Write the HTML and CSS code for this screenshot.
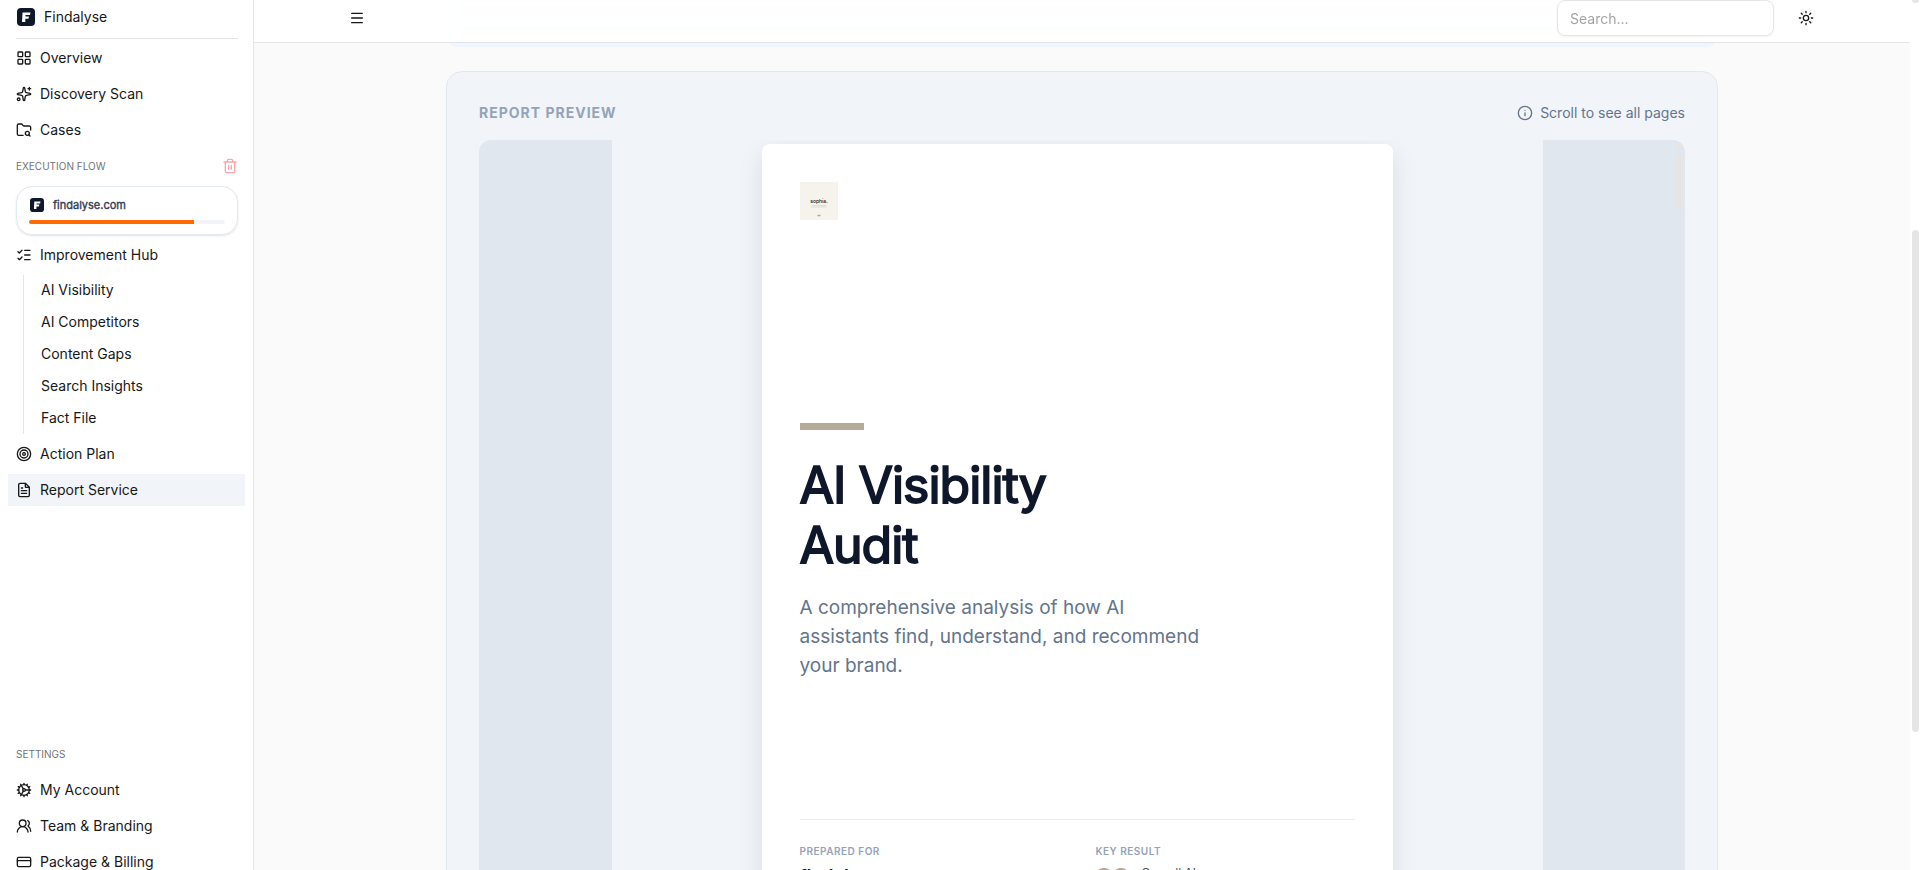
FILE: index.html
```html
<!DOCTYPE html>
<html lang="en">

<head>
    <meta charset="utf-8">
    <meta name="viewport" content="width=device-width, initial-scale=1">
    <title>Findalyse - Report Service</title>
    <link rel="stylesheet" href="styles.css">
</head>

<body>

    <aside class="sidebar">
        <div class="brand">
            <svg class="brand-logo" viewBox="0 0 18 18"><rect width="18" height="18" rx="4" fill="#0f172a"/><path d="M5.5 4.500h8l-.5 2.500H8.500v1.500h3.500l-.5 2.300H8.300V14H5z" fill="#fff"/></svg>
            <span>Findalyse</span>
        </div>

        <nav class="nav">
            <a class="nav-item" href="#">
                <svg class="icon" viewBox="0 0 24 24"><rect x="3" y="3" width="7" height="7" rx="1"/><rect x="14" y="3" width="7" height="7" rx="1"/><rect x="14" y="14" width="7" height="7" rx="1"/><rect x="3" y="14" width="7" height="7" rx="1"/></svg>
                Overview
            </a>
            <a class="nav-item" href="#">
                <svg class="icon" viewBox="0 0 24 24"><path d="M11.017 2.814a1 1 0 0 1 1.966 0l1.051 5.558a2 2 0 0 0 1.594 1.594l5.558 1.051a1 1 0 0 1 0 1.966l-5.558 1.051a2 2 0 0 0-1.594 1.594l-1.051 5.558a1 1 0 0 1-1.966 0l-1.051-5.558a2 2 0 0 0-1.594-1.594l-5.558-1.051a1 1 0 0 1 0-1.966l5.558-1.051a2 2 0 0 0 1.594-1.594z"/><path d="M20 2v4M22 4h-4"/><circle cx="4" cy="20" r="2"/></svg>
                Discovery Scan
            </a>
            <a class="nav-item" href="#">
                <svg class="icon" viewBox="0 0 24 24"><path d="M10.700 20H4a2 2 0 0 1-2-2V5a2 2 0 0 1 2-2h3.900a2 2 0 0 1 1.690.9l.81 1.200a2 2 0 0 0 1.670.9H20a2 2 0 0 1 2 2v4.100"/><path d="m21 21-1.900-1.900"/><circle cx="17" cy="17" r="3"/></svg>
                Cases
            </a>

            <div class="section-label">
                <span>EXECUTION FLOW</span>
                <button class="trash" type="button" aria-label="Clear flow">
                    <svg class="icon" viewBox="0 0 24 24"><path d="M3 6h18M19 6v14a2 2 0 0 1-2 2H7a2 2 0 0 1-2-2V6M8 6V4a2 2 0 0 1 2-2h4a2 2 0 0 1 2 2v2M10 11v6M14 11v6"/></svg>
                </button>
            </div>

            <div class="flow-card">
                <div class="flow-site">
                    <svg class="flow-logo" viewBox="0 0 18 18"><rect width="18" height="18" rx="4" fill="#0f172a"/><path d="M5.500 4.500h8l-.5 2.500H8.500v1.500h3.500l-.5 2.300H8.300V14H5z" fill="#fff"/></svg>
                    <span>findalyse.com</span>
                </div>
                <div class="progress"><div class="progress-bar" style="width: 84%"></div></div>
            </div>

            <a class="nav-item" href="#">
                <svg class="icon" viewBox="0 0 24 24"><path d="M13 5h8M13 12h8M13 19h8M3 17l2 2 4-4M3 7l2 2 4-4"/></svg>
                Improvement Hub
            </a>
            <div class="subnav">
                <a href="#">AI Visibility</a>
                <a href="#">AI Competitors</a>
                <a href="#">Content Gaps</a>
                <a href="#">Search Insights</a>
                <a href="#">Fact File</a>
            </div>
            <a class="nav-item" href="#">
                <svg class="icon" viewBox="0 0 24 24"><circle cx="12" cy="12" r="10"/><circle cx="12" cy="12" r="6"/><circle cx="12" cy="12" r="2"/></svg>
                Action Plan
            </a>
            <a class="nav-item active" href="#">
                <svg class="icon" viewBox="0 0 24 24"><path d="M6 22a2 2 0 0 1-2-2V4a2 2 0 0 1 2-2h8l6 6v12a2 2 0 0 1-2 2z"/><path d="M14 2v5a1 1 0 0 0 1 1h5M10 9H8M16 13H8M16 17H8"/></svg>
                Report Service
            </a>
        </nav>

        <nav class="nav">
            <div class="section-label"><span>SETTINGS</span></div>
            <a class="nav-item" href="#">
                <svg class="icon" viewBox="0 0 24 24"><path d="M11 10.270 7 3.340M11 13.730l-4 6.930M12 22v-2M12 2v2M14 12h8M17 20.660l-1-1.730M17 3.340l-1 1.730M2 12h2M20.660 17l-1.730-1M20.660 7l-1.730 1M3.340 17l1.730-1M3.340 7l1.730 1"/><circle cx="12" cy="12" r="2"/><circle cx="12" cy="12" r="8"/></svg>
                My Account
            </a>
            <a class="nav-item" href="#">
                <svg class="icon" viewBox="0 0 24 24"><path d="M18 21a8 8 0 0 0-16 0"/><circle cx="10" cy="8" r="5"/><path d="M22 20c0-3.370-2-6.500-4-8a5 5 0 0 0-.45-8.300"/></svg>
                Team &amp; Branding
            </a>
            <a class="nav-item" href="#">
                <svg class="icon" viewBox="0 0 24 24"><rect x="2" y="5" width="20" height="14" rx="2"/><path d="M2 10h20"/></svg>
                Package &amp; Billing
            </a>
        </nav>
    </aside>

    <main class="main">
        <header class="topbar">
            <div class="topbar-inner">
                <button class="icon-button menu" type="button" aria-label="Toggle menu">
                    <svg class="icon" viewBox="0 0 24 24"><path d="M4 5h16M4 12h16M4 19h16"/></svg>
                </button>
                <input class="search" type="search" placeholder="Search..." aria-label="Search">
                <button class="icon-button" type="button" aria-label="Toggle theme">
                    <svg class="icon" viewBox="0 0 24 24"><circle cx="12" cy="12" r="4"/><path d="M12 2v2M12 20v2M4.930 4.930l1.410 1.410M17.660 17.660l1.410 1.410M2 12h2M20 12h2M6.340 17.660l-1.410 1.410M19.070 4.930l-1.410 1.410"/></svg>
                </button>
            </div>
        </header>

        <div class="content">
            <div class="banner"></div>

            <section class="preview">
                <div class="preview-head">
                    <h2>REPORT PREVIEW</h2>
                    <span class="hint">
                        <svg class="icon" viewBox="0 0 24 24"><circle cx="12" cy="12" r="10"/><path d="M12 16v-4M12 8h.01"/></svg>
                        Scroll to see all pages
                    </span>
                </div>

                <div class="viewer">
                    <div class="canvas">
                        <article class="page">
                            <svg class="client-logo" viewBox="0 0 38 38">
                                <rect width="38" height="38" fill="#f6f3ec"/>
                                <text x="19" y="21" text-anchor="middle" font-size="5" font-weight="500" fill="#111">sophia.</text>
                                <path d="M12 23.500h14M11 25h16" stroke="#d5d2cb" stroke-width=".7"/>
                                <path d="M17.500 33.500h3" stroke="#aaa79f" stroke-width="1.500"/>
                            </svg>
                            <div class="accent"></div>
                            <h1>AI Visibility<br>Audit</h1>
                            <p class="summary">A comprehensive analysis of how AI assistants find, understand, and recommend your brand.</p>
                            <div class="meta">
                                <div>
                                    <h3>PREPARED FOR</h3>
                                    <p class="client">findalyse</p>
                                </div>
                                <div>
                                    <h3>KEY RESULT</h3>
                                    <p class="score"><strong>88</strong> <span>Overall AI</span></p>
                                </div>
                            </div>
                        </article>
                    </div>
                    <div class="viewer-scroll"><i></i><b></b></div>
                </div>
            </section>
        </div>
    </main>

    <div class="page-scroll"><i></i><b></b></div>

</body>

</html>
```
FILE: styles.css
```css
* {
    box-sizing: border-box;
}
body {
    margin: 0;
    display: flex;
    height: 100vh;
    overflow: hidden;
    background: #fff;
    color: #171717;
    font-family: Inter, "Liberation Sans", sans-serif;
    font-size: 14px;
    line-height: 20px;
}
h1, h2, h3, p {
    margin: 0;
}
a {
    color: inherit;
    text-decoration: none;
}
button {
    padding: 0;
    border: 0;
    background: none;
    color: inherit;
    cursor: pointer;
}
.icon {
    flex: none;
    width: 16px;
    height: 16px;
    fill: none;
    stroke: currentColor;
    stroke-width: 2;
    stroke-linecap: round;
    stroke-linejoin: round;
}

/* regular cut thickened by a stroke */
.flow-site,
.page h1 {
    font-weight: 400;
    -webkit-text-stroke: 0.035em currentColor;
}

/* sidebar */
.sidebar {
    flex: none;
    display: flex;
    flex-direction: column;
    justify-content: space-between;
    width: 254px;
    height: calc(100vh + 8px);
    border-right: 1px solid #e5e5e5;
}
.brand {
    display: flex;
    align-items: center;
    gap: 9px;
    height: 39px;
    margin: 0 15px 0 16px;
    padding: 0 1px 4px;
    border-bottom: 1px solid #e5e5e5;
}
.brand-logo {
    width: 18px;
    height: 18px;
}
.nav {
    display: flex;
    flex-direction: column;
    gap: 4px;
    padding: 0 8px;
}
.brand + .nav {
    flex: 1;
    padding-top: 3px;
}
.nav-item {
    display: flex;
    align-items: center;
    gap: 8px;
    height: 32px;
    padding: 0 8px;
}
.nav-item.active {
    background: #f1f5f9;
}
.section-label {
    display: flex;
    align-items: center;
    justify-content: space-between;
    height: 32px;
    padding: 0 7px 0 8px;
    color: #737373;
    font-size: 10px;
}
.trash {
    display: flex;
    color: #fca5a5;
}
.flow-card {
    margin: 0 7px 0 8px;
    padding: 10px 12px;
    height: 49px;
    border: 1px solid #e2e8f0;
    border-radius: 16px;
    box-shadow: 0 1px 2px rgba(15, 23, 42, 0.12);
}
.flow-site {
    display: flex;
    align-items: center;
    gap: 9px;
    height: 16px;
    margin-bottom: 7px;
    padding-left: 1px;
    color: #334155;
    font-size: 11px;
}
.flow-logo {
    width: 14px;
    height: 14px;
}
.progress {
    height: 4px;
    border-radius: 2px;
    background: #f1f5f9;
    overflow: hidden;
}
.progress-bar {
    height: 100%;
    background: #ff6900;
}
.subnav {
    display: flex;
    flex-direction: column;
    gap: 4px;
    margin-left: 15px;
    padding: 1px 0 2px 17px;
    border-left: 1px solid #e5e5e5;
}
.subnav a {
    line-height: 28px;
}

/* top bar */
.main {
    position: relative;
    flex: 1;
    background: #fafafa;
    overflow: hidden;
}
.topbar {
    position: absolute;
    z-index: 1;
    top: 0;
    left: 0;
    right: 0;
    height: 43px;
    border-bottom: 1px solid #e5e5e5;
    background: rgba(255, 255, 255, 0.9);
    backdrop-filter: blur(12px);
}
.topbar-inner {
    display: flex;
    align-items: center;
    gap: 16px;
    max-width: 1480px;
    height: 36px;
    margin: 0 auto;
}
.icon-button {
    display: flex;
    align-items: center;
    justify-content: center;
    width: 32px;
    height: 32px;
}
.menu {
    width: 30px;
}
.search {
    width: 217px;
    height: 36px;
    margin-left: auto;
    padding: 0 12px;
    border: 1px solid #e5e5e5;
    border-radius: 8px;
    background: #fff;
    box-shadow: 0 1px 2px rgba(0, 0, 0, 0.05);
    font: inherit;
}
.search::placeholder {
    color: #a3a3a3;
}

/* report preview */
.content {
    width: 1272px;
    max-width: 100%;
    margin: 0 auto;
}
.banner {
    height: 47px;
    margin-bottom: 24px;
    border-radius: 0 0 12px 12px;
    background: #eff6ff;
}
.preview {
    padding: 31px 32px;
    border: 1px solid #e2e8f0;
    border-radius: 16px;
    background: #f1f5f9;
}
.preview-head {
    display: flex;
    align-items: center;
    justify-content: space-between;
    margin-bottom: 17px;
}
.preview-head h2 {
    color: #94a3b8;
    font-size: 14px;
    font-weight: 700;
    letter-spacing: 1px;
}
.hint {
    display: flex;
    align-items: center;
    gap: 7px;
    color: #64748b;
}
.viewer {
    display: flex;
    border-radius: 12px;
    background: #e1e7ef;
    overflow: hidden;
}
.canvas {
    width: 931px;
    margin: 0 auto;
    padding: 4px 0 40px;
    background: #f1f5f9;
}
.page {
    display: flex;
    flex-direction: column;
    width: 631px;
    height: 893px;
    margin: 0 auto;
    padding: 38px;
    border-radius: 8px;
    background: #fff;
    box-shadow: 0 8px 24px rgba(15, 23, 42, 0.1);
}
.client-logo {
    width: 38px;
    height: 38px;
}
.accent {
    width: 64px;
    height: 7px;
    margin: 203px 0 25px;
    background: #b5ab98;
}
.page h1 {
    color: #0f172a;
    font-size: 50px;
    line-height: 60px;
    letter-spacing: -1px;
}
.summary {
    max-width: 416px;
    margin-top: 18px;
    color: #64748b;
    font-size: 19px;
    line-height: 29px;
}
.meta {
    display: grid;
    grid-template-columns: 1fr 1fr;
    gap: 37px;
    margin-top: 139px;
    padding-top: 24px;
    border-top: 1px solid #e9ecef;
}
.meta h3 {
    margin-bottom: 7px;
    color: #94a3b8;
    font-size: 10px;
    font-weight: 600;
    line-height: 14px;
    letter-spacing: 0.05em;
}
.client {
    color: #0f172a;
    font-size: 18px;
    font-weight: 600;
    line-height: 24px;
}
.score {
    display: flex;
    gap: 12px;
    color: #475569;
    font-size: 12px;
    line-height: 16px;
}
.score strong {
    color: #b5ab98;
    font-size: 26px;
    line-height: 26px;
}

/* scroll tracks */
.viewer-scroll,
.page-scroll {
    flex: none;
    display: flex;
    flex-direction: column;
    width: 10px;
}
.viewer-scroll i,
.viewer-scroll b,
.page-scroll i,
.page-scroll b {
    width: 7px;
    border-radius: 4px;
    background: #e5e5e5;
}
.viewer-scroll i {
    height: 6px;
    margin: 3px 1px 6px;
}
.viewer-scroll b {
    height: 55px;
    margin: 0 1px;
}
.page-scroll i {
    height: 3px;
    margin: 0 2px 227px;
    border-radius: 0 0 4px 4px;
}
.page-scroll b {
    height: 502px;
    margin: 0 2px;
}
```
